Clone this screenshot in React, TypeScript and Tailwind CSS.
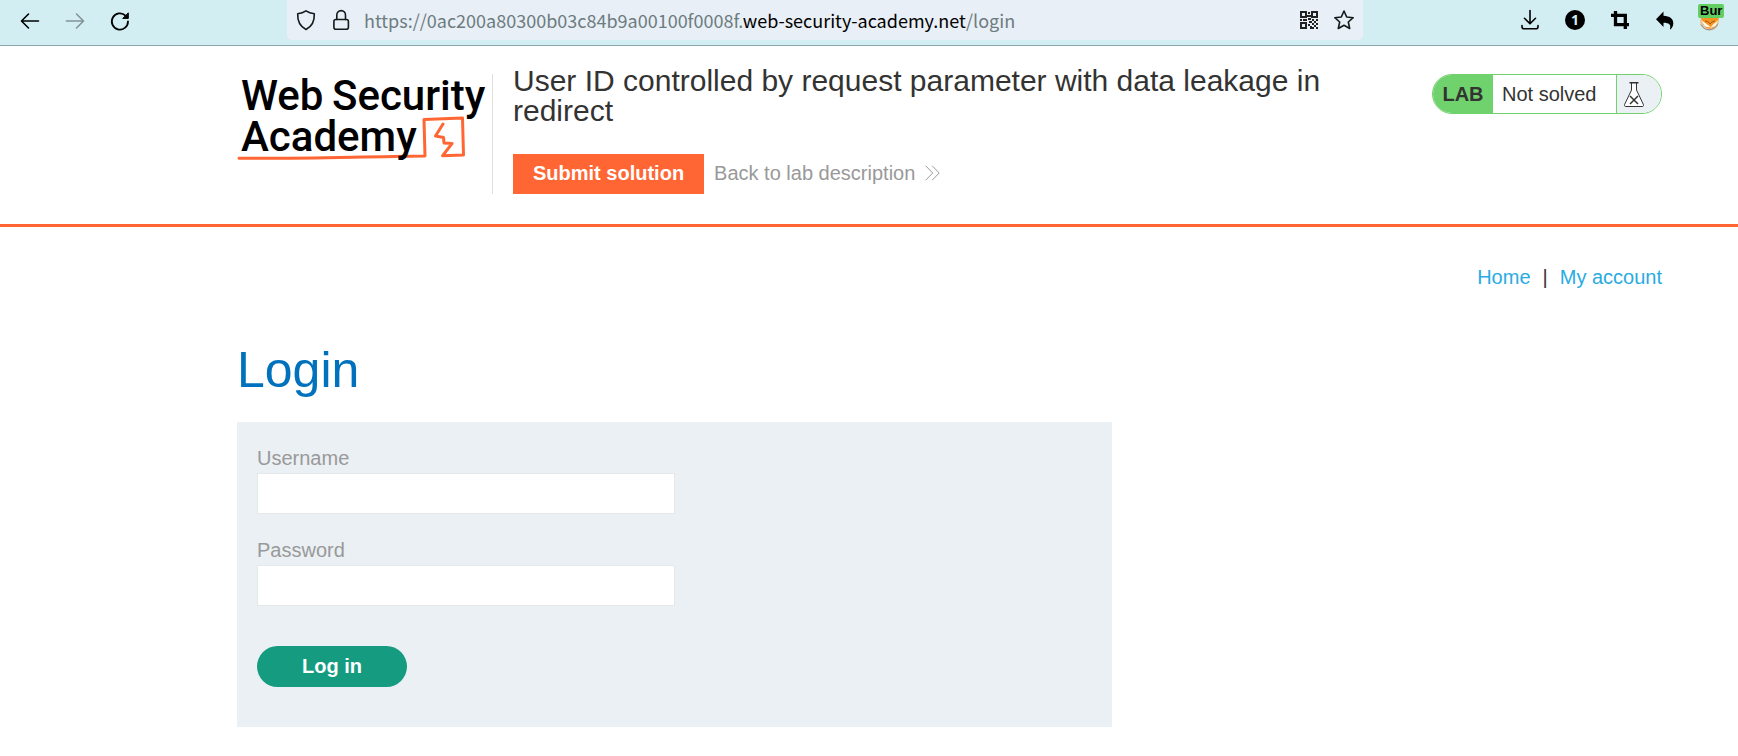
import type { ReactNode } from "react";

function ToolButton({ label, children }: { label: string; children: ReactNode }) {
  return (
    <button type="button" aria-label={label} className="flex size-6 shrink-0 items-center justify-center text-black">
      {children}
    </button>
  );
}

const stroke = {
  fill: "none",
  stroke: "currentColor",
  strokeWidth: 1.6,
  strokeLinecap: "round" as const,
  strokeLinejoin: "round" as const,
};

function BrowserBar() {
  return (
    <header className="flex h-[46px] items-start border-b border-[#8fa6aa] bg-[#d2eef2] pr-4 pl-[18px]">
      <nav aria-label="History" className="flex h-[41px] items-center gap-[21px]">
        <ToolButton label="Back">
          <svg viewBox="0 0 24 24" className="size-6" {...stroke}>
            <path d="M20.5 12H3.8M10.5 5 3.5 12l7 7" />
          </svg>
        </ToolButton>
        <ToolButton label="Forward">
          <svg viewBox="0 0 24 24" className="size-6 text-[#829497]" {...stroke}>
            <path d="M3.5 12h16.7M13.5 5l7 7-7 7" />
          </svg>
        </ToolButton>
        <ToolButton label="Reload">
          <svg viewBox="0 0 24 24" className="size-6" {...stroke}>
            <path d="M20 12.500A8.100 8.100 0 1 1 17.500 6.600" strokeWidth="1.800" />
            <path d="M20.300 4.200v5.200h-5.200z" fill="currentColor" strokeWidth="1" />
          </svg>
        </ToolButton>
      </nav>

      <div className="mx-[155px] flex h-10 min-w-0 flex-1 items-center gap-[11px] rounded-b-[5px] bg-[#e8eff6] px-[7px]">
        <ToolButton label="Tracking protection">
          <svg viewBox="0 0 24 24" className="size-6 text-[#15191a]" {...stroke}>
            <path d="M12 2.800c2.500 1.700 5 2.500 8.300 2.900.3 7-2 12.500-8.300 15.800C5.700 18.200 3.400 12.700 3.700 5.700 7 5.300 9.500 4.500 12 2.800z" />
          </svg>
        </ToolButton>
        <ToolButton label="Connection secure">
          <svg viewBox="0 0 24 24" className="size-6 text-[#15191a]" {...stroke}>
            <rect x="4.900" y="11.500" width="14.500" height="9.700" rx="2" />
            <path d="M7.800 11.500V7a4.350 4.350 0 0 1 8.700 0v4.500" />
          </svg>
        </ToolButton>
        <div className="min-w-0 flex-1 truncate font-['Noto_Sans_CJK_SC','Noto_Sans',sans-serif] text-[18px] leading-[38px] text-[#6d7c80]">
          https://0ac200a80300b03c84b9a00100f0008f.
          <span className="text-black">web-security-academy.net</span>/login
        </div>
        <ToolButton label="QR code">
          <svg viewBox="0 0 18 18" className="size-[18px]" shapeRendering="crispEdges">
            <g fill="none" stroke="#222" strokeWidth="2">
              <path d="M1 1h5v5H1zM12 1h5v5h-5zM1 12h5v5H1z" />
            </g>
            <path
              d="M8 1h2v2H8zM7 4h4v2H7zM8 7h3v2H8zM0 8h2v2H0zM3 8h4v2H3zM12 8h2v2h-2zM16 8h2v2h-2zM9 10h3v2H9zM14 10h2v2h-2zM8 13h2v2H8zM12 12h2v2h-2zM16 12h2v2h-2zM10 15h2v3h-2zM14 14h2v2h-2zM16 16h2v2h-2zM12 16h2v2h-2z"
              fill="#222"
            />
          </svg>
        </ToolButton>
        <ToolButton label="Bookmark this page">
          <svg viewBox="0 0 24 24" className="size-6 text-[#15191a]" {...stroke}>
            <path d="m12 3 2.700 6 6.500.7-4.900 4.300 1.400 6.500L12 17.200l-5.700 3.300L7.700 14 2.800 9.700l6.500-.7z" />
          </svg>
        </ToolButton>
      </div>

      <div className="flex h-10 items-center gap-[21px]">
        <ToolButton label="Downloads">
          <svg viewBox="0 0 24 24" className="size-6" {...stroke}>
            <path d="M12 2.500v13M6.500 10.300l5.500 5.500 5.500-5.500M4 17.500v1.200c0 1.200.8 2 2 2h12c1.200 0 2-.8 2-2v-1.200" />
          </svg>
        </ToolButton>
        <ToolButton label="Container tab 1">
          <span className="flex size-5 items-center justify-center rounded-full bg-black font-['Noto_Sans',sans-serif] text-[14px] leading-5 font-bold text-[#d2eef2]">
            1
          </span>
        </ToolButton>
        <ToolButton label="Capture">
          <svg viewBox="0 0 24 24" className="size-6" fill="none" stroke="#000" strokeWidth="3.300">
            <path d="M3 7.300h14.300V21M7.500 3v13.700H21" />
          </svg>
        </ToolButton>
        <ToolButton label="Undo close tab">
          <svg viewBox="0 0 24 24" className="size-6" fill="#000">
            <path d="M10.500 3.500v4.300c6.500.2 9.800 3.300 9.800 7.500 0 2.400-.9 4.400-2.700 6-.4.300-.8 0-.6-.5 1.300-4.300-1-6-6.500-6.100v4.300L3 11.200z" />
          </svg>
        </ToolButton>
        <button type="button" aria-label="Proxy: Bur" className="relative size-6 shrink-0">
          <svg viewBox="0 0 24 24" className="size-6">
            <circle cx="11.500" cy="13" r="9.500" fill="#e9c29b" />
            <path d="M3 9c1 7 4 11.500 9 11.500s8-5 9-11.500z" fill="#f7941e" />
            <path d="m3 12 4 6.500 6 1-4.500-3.500z" fill="#fff" />
            <path d="m20.500 12-3 6-5.500 2 3.500-4z" fill="#fff4e6" />
            <path d="m7 13 3.500 1 1.500 2 2-2 3-1" fill="none" stroke="#9c5a1c" />
            <path d="M3 16.500c3 7 13 7 16.500 0" fill="none" stroke="#8e8a86" />
          </svg>
          <span className="absolute -top-1 left-0 rounded-[2px] bg-[#62cf62] px-0.5 font-['Liberation_Sans',sans-serif] text-[13px] leading-[14px] font-bold text-black">
            Bur
          </span>
        </button>
      </div>
    </header>
  );
}

function AcademyLogo() {
  return (
    <a href="#academy" aria-label="Web Security Academy" className="block h-[120px] w-64 shrink-0 border-r border-[#e0e0e0]">
      <svg viewBox="0 0 255 92" className="h-[92px] w-[255px] overflow-visible">
        <path
          d="M2 84.200C60 85 110 83 188 82L187 45.500l38.500-1.500 1 37-21 .8 9.500-12.300-8-.5-.5-5.500-8-1.500L206 50"
          fill="none"
          stroke="#ff6633"
          strokeWidth="3"
          strokeLinejoin="round"
          strokeLinecap="round"
        />
        <g fill="#000" className="font-['Roboto',sans-serif] text-[42px] font-medium">
          <text x="4" y="36">Web</text>
          <text x="95" y="36">Security</text>
          <text x="4" y="77">Academy</text>
        </g>
      </svg>
    </a>
  );
}

function LabStatus() {
  return (
    <div className="mt-2 flex h-10 w-[230px] shrink-0 overflow-hidden rounded-full border border-[#70d26d] bg-white text-[#333332]">
      <span className="flex w-[60px] items-center justify-center bg-[#70d26d] font-bold">LAB</span>
      <span className="flex flex-1 items-center pl-[9px]">Not solved</span>
      <span className="flex w-[45px] items-center border-l border-[#70d26d] bg-[#eaf0f3] pl-[7px]">
        <svg viewBox="0 0 20 25" className="h-[25px] w-5" fill="none" stroke="#333" strokeWidth="1">
          <path d="M7.500.5v7.500L.7 22.300c-.6 1.300-.2 2.200 1 2.200h16.600c1.200 0 1.600-.9 1-2.200L12.500 8V.5" fill="#fff" />
          <path d="M5.500.7h9" strokeWidth="1.400" />
          <path d="m6 14 8 8M14 14l-8 8" strokeWidth="1.500" />
        </svg>
      </span>
    </div>
  );
}

function Field({ id, label, type }: { id: string; label: string; type: string }) {
  return (
    <div className="flex flex-col">
      <label htmlFor={id} className="leading-[29px] text-[#999]">{label}</label>
      <input id={id} name={id} type={type} className="h-[41px] w-[418px] max-w-full border border-[#e4e8e9] bg-white px-2.5 outline-none" />
    </div>
  );
}

export default function App() {
  return (
    <div className="min-h-screen bg-white font-['Liberation_Sans',Arial,sans-serif] text-[20px] leading-[30px] text-[#333332]">
      <BrowserBar />

      <section className="border-b-[3px] border-[#ff6633] pt-5 pr-[76px] pb-[30px] pl-[237px]">
        <div className="flex items-start">
          <div className="pt-2">
            <AcademyLogo />
          </div>
          <div className="min-w-0 flex-1 pl-5">
            <h2 className="max-w-[875px] text-[30px] leading-[30px]">
              User ID controlled by request parameter with data leakage in redirect
            </h2>
            <div className="mt-7 flex items-center gap-2.5">
              <button type="button" className="h-10 bg-[#ff6633] px-5 pb-0.5 font-bold text-white">Submit solution</button>
              <a href="#lab" className="flex items-center gap-2.5 pb-0.5 text-[#999]">
                Back to lab description
                <svg viewBox="0 0 15 16" className="h-4 w-[15px]" fill="none" stroke="#999">
                  <path d="m.7.8 7 7.200-7 7.200M7.200.8l7 7.200-7 7.200" />
                </svg>
              </a>
            </div>
          </div>
          <LabStatus />
        </div>
      </section>

      <main className="pt-[35px] pr-[76px] pl-[237px]">
        <nav aria-label="Account" className="flex justify-end gap-3">
          <a href="#home" className="text-[#29abe2]">Home</a>
          <span>|</span>
          <a href="#my-account" className="text-[#29abe2]">My account</a>
        </nav>
        <h1 className="mt-[50px] text-[50px] leading-[56px] text-[#0071bc]">Login</h1>
        <form className="mt-6 flex max-w-[875px] flex-col items-start bg-[#eaf0f3] px-5 pt-[22px] pb-10" onSubmit={(e) => e.preventDefault()}>
          <div className="flex flex-col gap-[22px]">
            <Field id="username" label="Username" type="text" />
            <Field id="password" label="Password" type="password" />
          </div>
          <button type="submit" className="mt-10 h-[41px] w-[150px] rounded-full bg-[#159b80] pb-0.5 font-bold text-white">Log in</button>
        </form>
      </main>
    </div>
  );
}
